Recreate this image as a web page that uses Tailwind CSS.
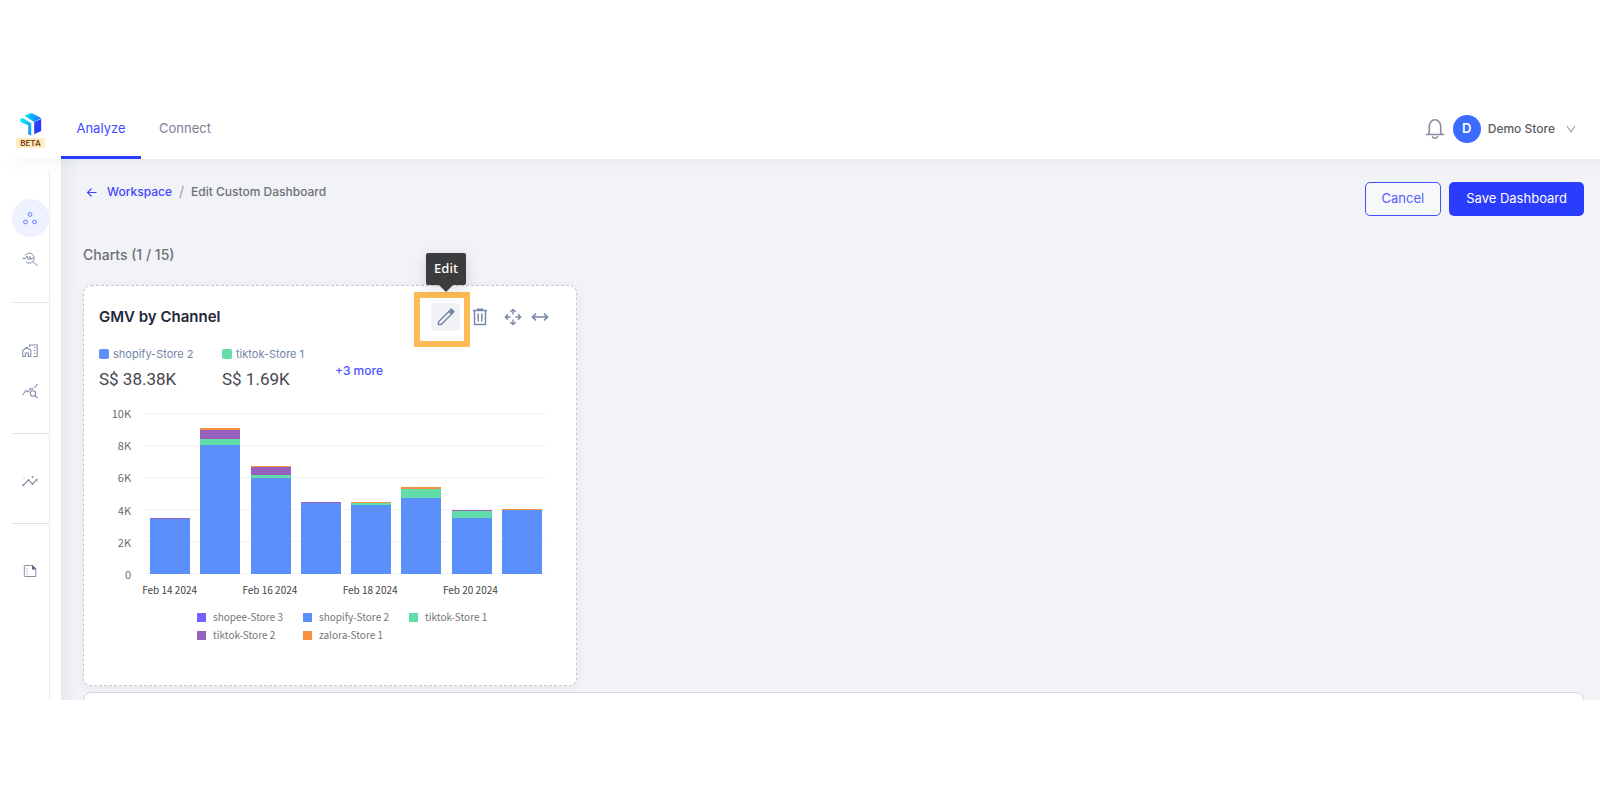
<!DOCTYPE html>
<html lang="en">
<head>
    <meta charset="UTF-8">
    <meta name="viewport" content="width=device-width, initial-scale=1.0">
    <title>Edit Custom Dashboard</title>
    <script src="https://cdn.jsdelivr.net/npm/@tailwindcss/browser@4"></script>
</head>
<body class="min-h-screen bg-white py-[100px] font-['Inter',sans-serif]">
    <div class="flex h-[600px] flex-col overflow-hidden">
        <!-- Header -->
        <header class="relative z-10 flex h-[59px] shrink-0 items-stretch bg-white shadow-[12px_4px_16px_rgba(40,50,90,0.05)]">
            <a href="#" aria-label="Home" class="flex w-[61px] flex-col items-center pt-3">
                <svg class="h-6 w-6" viewBox="0 0 24 24">
                    <defs>
                        <linearGradient id="logoTop" x1="0" y1="0" x2="1" y2="0"><stop offset="0" stop-color="#00e5ff"/><stop offset="1" stop-color="#1a70f5"/></linearGradient>
                        <linearGradient id="logoLeft" x1="0" y1="0" x2="1" y2="1"><stop offset="0" stop-color="#00f0f5"/><stop offset="1" stop-color="#1a8cff"/></linearGradient>
                    </defs>
                    <path d="M5.500 3.700 12.500 1l9.700 5-7 4z" fill="url(#logoTop)"/>
                    <path d="M1.500 6.300h2.700l8 5v12.400l-3-1.400v-9L1.500 10z" fill="url(#logoLeft)"/>
                    <path d="m15.200 10.300 7-3.600V19l-7 3.300z" fill="#2b3cff"/>
                </svg>
                <span class="mt-0.5 rounded-xs bg-[#ffedc2] px-1 text-[8px] leading-[10px] font-semibold text-[#7d3a12]">BETA</span>
            </a>
            <nav class="flex text-[13px]">
                <a href="#" class="flex w-20 items-center justify-center border-b-[3px] border-[#2a3dff] pt-0.5 text-[#3d4dff]">Analyze</a>
                <a href="#" class="flex items-center border-b-[3px] border-transparent px-[18px] pt-0.5 text-[#7a7f93]">Connect</a>
            </nav>
            <div class="ml-auto flex items-center pr-[23px] pb-0.5">
                <button aria-label="Notifications" class="mr-2">
                    <svg class="h-[22px] w-5" viewBox="0 0 20 22" fill="none" stroke="#8b8aa3" stroke-width="1.600">
                        <path d="M1.500 16.500h17M3.500 16.500l.8-3V8.500a5.700 6.800 0 0 1 11.400 0v5l.8 3M7.500 18.800a2.600 2 0 0 0 5 0" stroke-linecap="round"/>
                    </svg>
                </button>
                <span class="flex h-7 w-7 items-center justify-center rounded-full bg-[#3b6bff] text-[13px] font-semibold text-white">D</span>
                <button class="ml-[7px] flex items-center gap-[10px] text-xs font-medium text-[#5a5d66]">
                    Demo Store
                    <svg class="h-3 w-3" viewBox="0 0 12 12" fill="none" stroke="#9aa5b8" stroke-width="1.200"><path d="m2 3 4 6 4-6"/></svg>
                </button>
            </div>
        </header>

        <div class="flex min-h-0 flex-1">
            <!-- Sidebar -->
            <aside class="w-[61px] shrink-0 bg-white pt-3">
                <nav class="flex h-full w-[50px] flex-col border-r border-[#ededf1] pt-7 pl-3 text-[#8490a8]">
                    <a href="#" aria-label="Workspace" class="flex h-[38px] items-center justify-center rounded-full bg-[#eef2ff] pr-px text-[#6a7cff]">
                        <svg class="h-4 w-4" viewBox="0 0 16 16" fill="none" stroke="currentColor" stroke-width="1"><circle cx="8" cy="4.500" r="1.900"/><circle cx="3.500" cy="12" r="1.900"/><circle cx="12.500" cy="12" r="1.900"/></svg>
                    </a>
                    <a href="#" aria-label="Explore" class="mt-[3px] flex h-[38px] items-center justify-center pr-px">
                        <svg class="h-4 w-4" viewBox="0 0 16 16" fill="none" stroke="currentColor" stroke-width="1"><path d="M3 4.500a5 5 0 1 1 1 6.500M11 10.500l4.500 4.500M.5 7.500h3L5 5l1.500 4L8 5.500l1 3 1-1.500h1.500"/></svg>
                    </a>
                    <hr class="mt-6 border-[#e8e8ea]">
                    <a href="#" aria-label="Stores" class="mt-[29px] flex h-[38px] items-center justify-center pr-px">
                        <svg class="h-4 w-4" viewBox="0 0 16 16" fill="none" stroke="currentColor" stroke-width="1.100"><path d="M.8 13.500V7.500L4.800 4.300l4 3.200v6H6.300V10h-3v3.500zM7.500 4V2h7.700v11.500H11"/><path d="M12 4.500h1.500M12 7.500h1.500M12 10.500h1.500"/></svg>
                    </a>
                    <a href="#" aria-label="Queries" class="mt-[2px] flex h-[38px] items-center justify-center pr-px">
                        <svg class="h-4 w-4" viewBox="0 0 16 16" fill="none" stroke="currentColor" stroke-width="1.100"><path d="m.5 12 3.500-4.500 2 1.500L8.500 5.500l1.500 1L11 5M12.500 5l3-4"/><circle cx="11" cy="10.500" r="2.700"/><path d="m13 12.500 2.500 2.500"/></svg>
                    </a>
                    <hr class="mt-[23px] border-[#e0e0e4]">
                    <a href="#" aria-label="Insights" class="mt-7 flex h-[38px] items-center justify-center pr-px">
                        <svg class="h-4 w-4" viewBox="0 0 16 16" fill="none" stroke="currentColor" stroke-width="1.100"><path d="m1.500 12 5-5 4 4 4-4"/><g fill="currentColor" stroke="none"><circle cx="1.300" cy="12.200" r="1.100"/><circle cx="6.500" cy="7" r="1.100"/><circle cx="10.500" cy="11" r="1.100"/><circle cx="14.700" cy="6.800" r="1.100"/><circle cx="10.500" cy="4" r="1"/><circle cx="2" cy="5" r=".8" opacity=".5"/></g></svg>
                    </a>
                    <hr class="mt-[23px] border-[#e0e0e4]">
                    <a href="#" aria-label="Reports" class="mt-7 flex h-[38px] items-center justify-center pr-px">
                        <svg class="h-4 w-4" viewBox="0 0 16 16" fill="none" stroke="currentColor" stroke-width="1"><path d="M3 2.500h7.500l3.300 3V13.500H3a.7.700 0 0 1-.7-.7V3.200a.7.700 0 0 1 .7-.7z"/><path d="M10 2.500h.8l3 3v1H10z" fill="#59688a" stroke="none"/><path d="M4.500 6h1.200M4.500 8.500h1.200M4.500 11h1.200"/></svg>
                    </a>
                </nav>
            </aside>

            <!-- Workspace -->
            <main class="min-w-0 flex-1 bg-[#f2f3f7] px-4 pt-[23px] pl-[22px] shadow-[inset_16px_0_12px_-8px_rgba(40,50,90,0.05)]">
                <div class="flex items-start justify-between">
                    <div class="flex items-center pl-[3px] text-xs font-medium text-[#6c7079]">
                        <a href="#" class="flex items-center gap-[9px] leading-5 text-[#3f48ff]">
                            <svg class="h-3 w-3" viewBox="0 0 12 12" fill="none" stroke="currentColor" stroke-width="1.100"><path d="M10.500 6.500h-9M5.500 2.500l-4 4 4 4"/></svg>
                            Workspace
                        </a>
                        <span class="mx-[7px] text-sm font-normal text-[#9a9ca3]">/</span>
                        <span>Edit Custom Dashboard</span>
                    </div>
                    <div class="flex gap-2 text-[13px]">
                        <button class="h-[34px] rounded-[5px] border border-[#3f51ff] bg-white/40 px-4 text-[#5560ff]">Cancel</button>
                        <button class="h-[34px] rounded-[5px] bg-[#2a3dff] px-[17px] text-white">Save Dashboard</button>
                    </div>
                </div>

                <h2 class="mt-[29px] text-sm leading-5 font-medium text-[#6c7079]">Charts (1 / 15)</h2>

                <section class="mt-5 h-[401px] w-[494px] rounded-lg border border-dashed border-[#c6c8cc] bg-white px-[15px] pt-[17px] shadow-[0_2px_10px_rgba(40,50,90,0.06)]">
                    <div class="flex h-7 items-center">
                        <h3 class="text-[15px] font-semibold text-[#25273a]">GMV by Channel</h3>
                        <div class="ml-auto flex items-center pr-2 text-[#7486a3]">
                            <div class="relative mr-3">
                                <button aria-label="Edit" aria-describedby="edit-tip" class="flex h-7 w-[29px] items-center justify-center rounded-sm bg-[#f1f2f5]">
                                    <svg class="h-[18px] w-[18px]" viewBox="0 0 18 18" fill="none" stroke="currentColor" stroke-width="1.400"><path d="M1.500 16.500v-2.700L11.800 3.500l2.700 2.700L4.200 16.500z"/><path d="m12.700 2.600 1.500-1.500 2.700 2.700-1.500 1.500z" fill="currentColor" stroke-linejoin="round"/></svg>
                                </button>
                                <!-- highlight box around the edit button -->
                                <span class="pointer-events-none absolute -top-[11px] -left-[17px] h-[55px] w-14 border-6 border-[#ffbb55]"></span>
                                <span id="edit-tip" role="tooltip" class="absolute -top-[50px] -left-[5px] flex h-8 w-10 items-center justify-center rounded-xs bg-[#3b3c3e] font-['Noto_Sans',sans-serif] text-[13px] font-medium text-white shadow-[0_4px_14px_rgba(0,0,0,0.15)]">
                                    Edit
                                    <svg class="absolute top-full h-[7px] w-[14px]" viewBox="0 0 14 7" fill="#3b3c3e"><path d="M0 0h14L7 7z"/></svg>
                                </span>
                            </div>
                            <button aria-label="Delete" class="mr-4">
                                <svg class="h-[18px] w-4" viewBox="0 0 16 18" fill="none" stroke="currentColor" stroke-width="1.500"><path d="M1 2.500h14M5 1.200h6M2.500 2.500v14h11v-14M6.200 5.500v8M9.800 5.500v8"/></svg>
                            </button>
                            <button aria-label="Move" class="mr-[9px]">
                                <svg class="h-[18px] w-[18px]" viewBox="0 0 18 18" fill="none" stroke="currentColor" stroke-width="1.300"><path d="M9 6.500V1.500M6.300 4 9 1.300 11.700 4M9 11.500v5M6.300 14 9 16.700l2.700-2.700M6.500 9h-5M4 6.300 1.300 9 4 11.700M11.500 9h5M14 6.300 16.700 9 14 11.700"/></svg>
                            </button>
                            <button aria-label="Resize width" class="mr-1">
                                <svg class="h-[18px] w-[18px]" viewBox="0 0 18 18" fill="none" stroke="currentColor" stroke-width="1.600"><path d="M1.500 9h15M5 5.500 1.500 9 5 12.500M13 5.500 16.500 9 13 12.500"/></svg>
                            </button>
                        </div>
                    </div>

                    <div class="mt-[15px] flex items-center">
                        <div class="w-[123px]">
                            <p class="flex items-center gap-1 text-[11px] leading-4 text-[#7185a6]"><span class="h-[10px] w-[10px] rounded-xs bg-[#5b8ff9]"></span>shopify-Store 2</p>
                            <p class="mt-[3px] font-[Roboto,sans-serif] text-[17px] leading-7 text-[#45474f]">S$ 38.38K</p>
                        </div>
                        <div class="w-[113px]">
                            <p class="flex items-center gap-1 text-[11px] leading-4 text-[#7185a6]"><span class="h-[10px] w-[10px] rounded-xs bg-[#61ddaa]"></span>tiktok-Store 1</p>
                            <p class="mt-[3px] font-[Roboto,sans-serif] text-[17px] leading-7 text-[#45474f]">S$ 1.69K</p>
                        </div>
                        <button class="pt-0.5 text-xs font-medium text-[#4a52ff]">+3 more</button>
                    </div>

                    <!-- Chart -->
                    <div class="mt-5 pr-[13px] font-['Noto_Sans_CJK_SC',sans-serif] text-[#6a6a6a]">
                        <div class="flex">
                            <div class="-my-2 flex w-8 flex-col justify-between text-right text-[11px] leading-4">
                                <span>10K</span><span>8K</span><span>6K</span><span>4K</span><span>2K</span><span>0</span>
                            </div>
                            <div class="relative ml-[14px] h-[161px] flex-1">
                                <div class="absolute inset-0 flex flex-col justify-between">
                                    <hr class="border-[#f3f3f5]"><hr class="border-[#f3f3f5]"><hr class="border-[#f3f3f5]"><hr class="border-[#f3f3f5]"><hr class="border-[#f3f3f5]"><hr class="border-[#f3f3f5]">
                                </div>
                                <div id="bars" class="relative flex h-full items-end justify-between pr-[6px] pl-[5px]"></div>
                            </div>
                        </div>
                        <div class="mt-2 ml-[36px] grid grid-cols-4 pr-[12px] text-center text-[10px] leading-4 text-[#444]">
                            <span class="pr-[31px]">Feb 14 2024</span><span class="pr-[31px]">Feb 16 2024</span><span class="pr-[31px]">Feb 18 2024</span><span class="pr-[31px]">Feb 20 2024</span>
                        </div>
                        <ul class="mt-[10px] ml-[98px] grid w-[318px] grid-cols-3 text-[10px] leading-[18px] text-[#757575]">
                            <li class="flex items-center gap-[7px]"><span class="h-[9px] w-[9px] bg-[#7262fd]"></span>shopee-Store 3</li>
                            <li class="flex items-center gap-[7px]"><span class="h-[9px] w-[9px] bg-[#5b8ff9]"></span>shopify-Store 2</li>
                            <li class="flex items-center gap-[7px]"><span class="h-[9px] w-[9px] bg-[#61ddaa]"></span>tiktok-Store 1</li>
                            <li class="flex items-center gap-[7px]"><span class="h-[9px] w-[9px] bg-[#9661bc]"></span>tiktok-Store 2</li>
                            <li class="flex items-center gap-[7px]"><span class="h-[9px] w-[9px] bg-[#f6903d]"></span>zalora-Store 1</li>
                        </ul>
                    </div>
                </section>

                <section class="mt-[6px] h-40 rounded-lg border border-[#d6d7da] bg-white"></section>
            </main>
        </div>
    </div>

    <script>
        // values per day in GMV: shopify-2, tiktok-1, tiktok-2, zalora-1
        const days = [
            [3400, 0, 100, 0],
            [8000, 375, 560, 125],
            [5950, 190, 500, 63],
            [4400, 0, 100, 0],
            [4300, 125, 0, 63],
            [4700, 580, 0, 125],
            [3480, 440, 60, 0],
            [3970, 0, 0, 63]
        ];
        const colors = ['bg-[#5b8ff9]', 'bg-[#61ddaa]', 'bg-[#9661bc]', 'bg-[#f6903d]'];

        document.getElementById('bars').innerHTML = days.map(day => `
            <div class="flex h-full w-10 flex-col-reverse">
                ${day.map((v, i) => v ? `<div class="${colors[i]}" style="height:${v / 100}%"></div>` : '').join('')}
            </div>
        `).join('');
    </script>
</body>
</html>
